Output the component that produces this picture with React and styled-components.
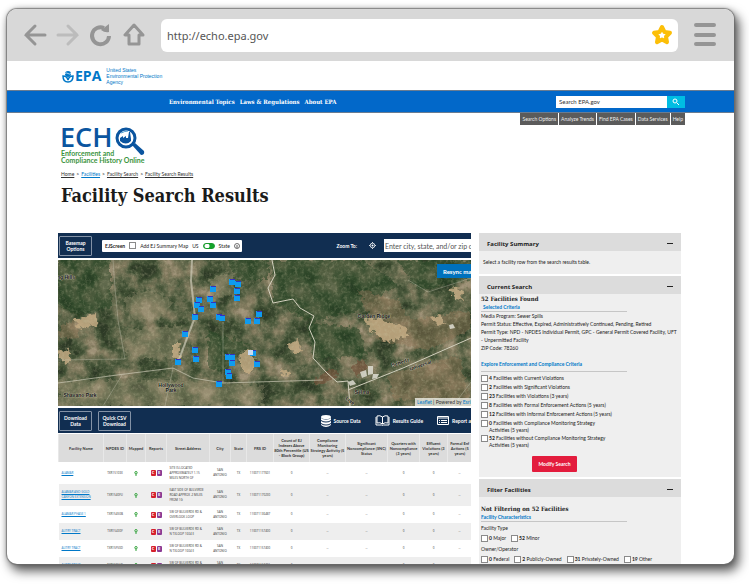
import React from "react";
import styled, { createGlobalStyle, css } from "styled-components";

const navy = "#112e51";
const blue = "#0268c9";
const link = "#0078c8";
const sans = 'Lato, "Open Sans", sans-serif';
const serif = '"DejaVu Serif Condensed", "DejaVu Serif", serif';

const GlobalStyle = createGlobalStyle`
  *, *::before, *::after { box-sizing: border-box; }
  body { margin: 0; background: #fff; color: #222; font-family: ${sans}; font-size: 5px; overflow: hidden; }
  h1, h2, h3, p, ul { margin: 0; padding: 0; }
  ul { list-style: none; }
  button, input { font: inherit; margin: 0; padding: 0; border: 0; border-radius: 0; }
  svg { display: block; flex: none; }
`;

const Desk = styled.div`
  height: 100vh;
  padding: 9px 15px 22px 7px;
`;

const BrowserWindow = styled.div`
  height: 100%;
  display: flex;
  flex-direction: column;
  border-radius: 10px;
  overflow: hidden;
  background: #fff;
  box-shadow: 0 0 1px 1px rgba(110, 110, 110, 0.75), 4px 6px 11px 1px rgba(0, 0, 0, 0.65), 0 0 6px rgba(0, 0, 0, 0.25);
`;

const Chrome = styled.header`
  flex: none;
  height: 52px;
  padding: 0 18px 0 16px;
  display: flex;
  align-items: center;
  background: #d8d8d8;
`;

const ChromeButtons = styled.div`
  display: flex;
  gap: 9px;
  width: 138px;
`;

const IconButton = styled.button`
  display: flex;
  background: none;
  color: ${(p) => (p.$faded ? "#bcbcbc" : "#959595")};
`;

const AddressBar = styled.div`
  flex: 1;
  display: flex;
  align-items: center;
  height: 33px;
  padding: 0 5px 0 6px;
  border-radius: 6px;
  background: #fff;
  margin-right: 16px;
`;

const AddressInput = styled.input`
  flex: 1;
  min-width: 0;
  background: none;
  color: #555;
  font: 11px "Noto Sans", sans-serif;
`;

const Page = styled.div`
  flex: 1;
  min-height: 0;
  overflow: hidden;
`;

const Agency = styled.div`
  height: 29px;
  padding: 1px 0 0 55px;
  display: flex;
  align-items: center;
  color: ${link};
`;

const AgencyMark = styled.strong`
  font: 700 14px/14px "Open Sans", sans-serif;
  margin: 0 5px 0 1px;
`;

const AgencyName = styled.p`
  font: 5px/6px "Liberation Sans", sans-serif;
`;

const NavBar = styled.nav`
  height: 23px;
  padding: 0 49px 0 162px;
  display: flex;
  align-items: center;
  gap: 5px;
  background: ${blue};
  border: solid #6a7c91;
  border-width: 1px 0;
`;

const NavLink = styled.a`
  color: #fff;
  font: 700 6px/10px ${serif};
  text-decoration: none;
`;

const SiteSearch = styled.form`
  margin-left: auto;
  display: flex;
  width: 129px;
  height: 12px;
`;

const SiteSearchInput = styled.input`
  flex: 1;
  min-width: 0;
  padding-left: 3px;
  background: #fff;
  font-size: 6px;
  color: #333;
  &::placeholder { color: #333; opacity: 1; }
`;

const SiteSearchButton = styled.button`
  width: 18px;
  display: grid;
  place-items: center;
  background: #00bde3;
  color: #fff;
`;

const Tools = styled.nav`
  display: flex;
  justify-content: flex-end;
  gap: 1px;
  padding-right: 49px;
`;

const Tool = styled.a`
  padding: 0 2px;
  text-align: center;
  background: #5b5b5b;
  color: #eee;
  font-size: 5px;
  line-height: 12px;
  text-decoration: none;
`;

const Masthead = styled.div`
  height: 108px;
  padding: 2px 0 0 54px;
`;

const Crumbs = styled.nav`
  display: flex;
  gap: 2px;
  margin-top: 3px;
  font-size: 5px;
  line-height: 8px;
`;

const Crumb = styled.a`
  color: ${(p) => (p.$active ? link : "#333")};
`;

const Title = styled.h1`
  margin-top: 6px;
  font: 700 18px/24px ${serif};
  color: #1b1b1b;
`;

const Columns = styled.div`
  display: grid;
  grid-template-columns: minmax(0, 1fr) 202px;
  gap: 8px;
  padding: 0 53px 0 51px;
`;

const Results = styled.main`
  min-width: 0;
  overflow: hidden;
  display: flex;
  flex-direction: column;
  gap: 2px;
`;

const Bar = styled.div`
  height: 25px;
  display: flex;
  align-items: center;
  background: ${navy};
  color: #fff;
  padding-left: 1px;
  white-space: nowrap;
  overflow: hidden;
`;

const OutlineButton = styled.button`
  width: 33px;
  height: 20px;
  flex: none;
  margin-right: 6px;
  border: 1px solid #8392a6;
  border-radius: 1px;
  background: none;
  color: #fff;
  font: 700 5px/6px ${sans};
  white-space: normal;
`;

const ScreenBox = styled.div`
  display: flex;
  align-items: center;
  flex: none;
  gap: 4px;
  height: 12px;
  margin-left: 4px;
  padding: 0 2px 0 3px;
  border-radius: 1px;
  background: #fff;
  color: #222;
  font-size: 5px;
`;

const Check = styled.input.attrs({ type: "checkbox" })`
  appearance: none;
  flex: none;
  width: 7px;
  height: 7px;
  border: 1px solid #8a8a8a;
  background: #fff;
`;

const Toggle = styled.input.attrs({ type: "checkbox", role: "switch" })`
  appearance: none;
  flex: none;
  width: 12px;
  height: 6px;
  border-radius: 3px;
  border: 1px solid #1a9a2c;
  background: radial-gradient(circle at 3px 2px, #fff 2px, #14a52b 3px);
`;

const ZoomLabel = styled.label`
  margin-left: auto;
  padding-right: 12px;
  font-size: 5px;
  font-weight: 700;
`;

const PlaceInput = styled.input`
  width: 87px;
  height: 13px;
  flex: none;
  margin-left: 8px;
  padding-left: 1px;
  background: #fff;
  font: 7px ${sans};
  &::placeholder { color: #555; opacity: 1; }
`;

const MapPane = styled.div`
  position: relative;
  height: 146px;
  overflow: hidden;
  background: #4d563b;
`;

const Resync = styled.button`
  position: absolute;
  top: 4px;
  right: 0;
  width: 34px;
  height: 14px;
  padding-left: 6px;
  overflow: hidden;
  white-space: nowrap;
  text-align: left;
  background: #0071bc;
  color: #fff;
  font: 700 6px ${sans};
`;

const Credit = styled.div`
  position: absolute;
  right: 0;
  bottom: 0;
  width: 56px;
  height: 8px;
  padding-left: 2px;
  overflow: hidden;
  white-space: nowrap;
  background: rgba(245, 245, 240, 0.75);
  font: 5px/8px ${sans};
  color: #333;
  a { color: ${link}; text-decoration: none; }
`;

const ActionLinks = styled.div`
  display: flex;
  justify-content: flex-end;
  flex: 1;
  gap: 14px;
`;

const ActionLink = styled.a`
  display: flex;
  align-items: center;
  gap: 3px;
  color: #fff;
  font-size: 5px;
  font-weight: 700;
  text-decoration: none;
`;

const Table = styled.table`
  width: 100%;
  margin-top: -1px;
  table-layout: fixed;
  border-collapse: collapse;
  text-align: center;
  font-size: 4px;
  line-height: 5px;
  color: #333;
`;

const Head = styled.th`
  width: ${(p) => p.$w}px;
  height: 28px;
  padding: 0;
  background: #dcdcdc;
  border-left: 1px solid #e8e8e8;
  font-weight: 700;
`;

const Row = styled.tr`
  height: ${(p) => (p.$tall ? 22 : 17)}px;
  background: ${(p) => (p.$shade ? "#eee" : "#fff")};
`;

const Cell = styled.td`
  padding: 0 2px;
  font: 3px/5px "Open Sans", sans-serif;
  ${(p) => p.$start && css`text-align: left; padding-left: ${p.$start}px; white-space: pre;`}
`;

const FacilityLink = styled.a`
  color: ${link};
`;

const Reports = styled.div`
  display: flex;
  justify-content: center;
  gap: 1px;
`;

const ReportTag = styled.a`
  width: 5px;
  height: 6px;
  border-radius: 1px;
  background: ${(p) => p.$color};
  color: #fff;
  font-size: 4px;
  line-height: 6px;
  font-weight: 700;
  text-decoration: none;
`;

const Center = styled.div`
  display: flex;
  justify-content: center;
`;

const Side = styled.aside`
  display: flex;
  flex-direction: column;
  gap: 2px;
`;

const Panel = styled.section`
  background: #efefef;
`;

const PanelHead = styled.h2`
  height: 18px;
  padding: 3px 8px 0;
  display: flex;
  align-items: center;
  justify-content: space-between;
  background: #dcdcdc;
  font: 700 6px/8px "Open Sans", sans-serif;
`;

const Collapse = styled.button`
  width: 6px;
  height: 1px;
  background: #222;
`;

const PanelBody = styled.div`
  min-height: ${(p) => p.$h}px;
  padding: ${(p) => p.$pad || "0 3px 0 2px"};
  font-size: 5px;
  line-height: 8px;
`;

const Found = styled.h3`
  font: 700 6px/9px ${serif};
`;

const Criteria = styled.h3`
  width: 146px;
  padding-left: ${(p) => p.$indent || 0}px;
  padding-bottom: ${(p) => p.$space || 0}px;
  margin-bottom: ${(p) => p.$after || 0}px;
  border-bottom: 1px solid #c6c6c6;
  color: ${link};
  font: 700 5px/8px ${sans};
`;

const Options = styled.ul`
  display: ${(p) => (p.$inline ? "flex" : "grid")};
  gap: ${(p) => (p.$inline ? "5px" : "1px")};
  padding: ${(p) => (p.$inline ? "3px 0 2px" : "3px 0 0")};
`;

const Option = styled.label`
  display: flex;
  gap: 1px;
  min-height: 8px;
`;

const OptionText = styled.span`
  max-width: 126px;
  line-height: 7px;
`;

const Modify = styled.button`
  display: block;
  margin: 7px 0 0 51px;
  width: 45px;
  height: 16px;
  border-radius: 1px;
  background: #e31c3d;
  color: #fff;
  font-size: 5px;
  font-weight: 700;
`;

const pins = [[174,22],[180,24],[155,29],[179,31],[179,38],[152,39],[141,40],[139,45],[155,45],[143,49],[201,54],[137,57],[161,57],[164,58],[190,61],[199,61],[127,74],[137,90],[138,99],[120,102],[170,97],[174,97],[174,103],[195,93],[199,104],[170,112],[171,116],[161,124]];

const MapArt = () => (
  <svg width="100%" height="100%" viewBox="0 0 413 146" preserveAspectRatio="xMidYMid slice" aria-label="Facility map">
    <defs>
      <filter id="land" x="0" y="0" width="1" height="1" colorInterpolationFilters="sRGB">
        <feTurbulence type="fractalNoise" baseFrequency="0.05" numOctaves="6" seed="12" />
        <feColorMatrix values="1.8 0 0 0 -.4 1.8 0 0 0 -.4 1.8 0 0 0 -.4 0 0 0 0 1" />
        <feComponentTransfer>
          <feFuncR type="table" tableValues=".18 .22 .27 .36 .44 .51 .62" />
          <feFuncG type="table" tableValues=".23 .28 .33 .39 .44 .48 .57" />
          <feFuncB type="table" tableValues=".15 .18 .22 .28 .33 .37 .47" />
        </feComponentTransfer>
      </filter>
      <filter id="grain" x="0" y="0" width="1" height="1" colorInterpolationFilters="sRGB">
        <feTurbulence type="fractalNoise" baseFrequency="0.3" numOctaves="3" seed="4" />
        <feColorMatrix values="0 0 0 0 .78 0 0 0 0 .76 0 0 0 0 .62 2.4 0 0 0 -1.1" />
      </filter>
      <filter id="rough">
        <feTurbulence type="fractalNoise" baseFrequency="0.2" numOctaves="2" seed="7" />
        <feDisplacementMap in="SourceGraphic" scale="9" xChannelSelector="R" yChannelSelector="G" />
      </filter>
    </defs>
    <rect width="413" height="146" filter="url(#land)" />
    <g filter="url(#rough)">
      <path fill="#233f22" opacity=".5" d="M0 0H53V48L20 55 0 45ZM214 0H305L340 25 300 50 255 62 215 42ZM250 62 300 68 310 95 255 100ZM170 0H210V20H175ZM150 70 190 85 165 112 150 108ZM340 0H413V20L360 30Z" />
      <path fill="#8e8a6b" opacity=".4" d="M65 40 90 28 115 42 98 62 74 58ZM150 18 175 13 178 35 160 38ZM0 120H120L205 125V146H0ZM66 70 125 65 115 98 70 100Z" />
      <path fill="#96775a" opacity=".4" d="M300 30 340 40 370 90 320 80ZM350 60 413 50V70L370 90ZM330 115 400 95 413 140H335ZM2 65 22 60 20 78 0 80Z" />
      <path fill="#c3aa83" opacity=".85" d="m306 60 15-2 28 10 2 9-24 5-14-12ZM228 84l12-5 4 12-9 1ZM371 57l11-2 5 7-7 4ZM115 83l8 0-2 16-6-2ZM181 96l10-8 8 14-6 12-10-6ZM0 92l9-3 5 9-8 6ZM222 109l11 3-7 7ZM392 28l11 2 3 10-9-1ZM15 59l22-5 4 10-18 5Z" />
      <path fill="#6d5039" d="m257 118 18-10 6 8-22 10Zm36-11 12-9 5 10-12 8Z" opacity=".7" />
    </g>
    <rect width="413" height="146" filter="url(#grain)" opacity=".3" />
    <g fill="none" stroke="#d2cfbd" strokeWidth="1">
      <path d="M214 0 217 15 210 28 215 43 235 39 242 48 256 56 251 68 257 82 255 98 269 113 279 122 290 121 292 146M413 78 345 108 310 122 290 130" />
      <path d="M134 0 133 21 137 57 120 102" strokeWidth="2" opacity=".65" />
      <path d="M0 123 59 115 115 108 135 118 165 123 265 120" opacity=".65" />
      <path d="M55 0 57 28 60 60 67 99 0 100M165 62V122M115 108 107 146M45 146 64 115M395 146 413 122M350 20 370 32 413 18" opacity=".35" />
    </g>
    <g fill="#deddd2" opacity=".85">
      <path d="m302 112 6-2 1 6-5 2Zm8-6 5 0 0 8-5 1Zm-20 16 5-2 3 4-6 2Zm25-8 6 0-2 4-5 1ZM391 65l4-1 2 4-5 1Z" />
    </g>
    {pins.map(([x, y], i) => (
      <g key={i}>
        <rect x={x - 3} y={y - 3} width="6" height="6" fill="#0f9bef" />
        <rect x={x - 2} y={y - 3} width="5" height="1" fill="#3430c0" />
      </g>
    ))}
    <rect x="190" y="90" width="5" height="5" fill="#cbdcf0" />
    <g fill="#111" stroke="#c4c1a8" strokeWidth=".6" paintOrder="stroke" fontFamily="Liberation Sans" fontWeight="700" fontSize="5" textAnchor="middle">
      <text x="316" y="58">Garden Ridge</text>
      <text x="113" y="127">Hollywood</text>
      <text x="113" y="132">Park</text>
      <text x="22" y="137">Shavano Park</text>
      <text x="8" y="19">ng Hills</text>
      <text x="304" y="134">Selma</text>
      <text x="343" y="104" transform="rotate(-20 343 104)">Schertz</text>
      <text x="363" y="107" transform="rotate(-20 363 107)">Universal</text>
      <text x="291" y="142" transform="rotate(40 291 142)">Live</text>
    </g>
  </svg>
);

const EchoLogo = () => (
  <svg width="86" height="40" viewBox="0 0 86 40" overflow="visible" role="img" aria-label="ECHO Enforcement and Compliance History Online">
    <text x="-1" y="20" fontFamily="Open Sans" fontWeight="600" fontSize="27" fill="#0b559f">ECH</text>
    <circle cx="65" cy="11" r="9" fill="#fff" stroke="#0b559f" strokeWidth="3" />
    <path d="m71 18 3-2 9 8q1 4-3 4Z" fill="#0b559f" />
    <path d="M59 14v-3l3-2v2l3-2 0 2 2 0 1-6h1l1 7v2q-5 5-11 0Z" fill="#0b559f" />
    <path d="M60 6q4-2 7-2" stroke="#4a9bd0" fill="none" />
    <g fontFamily="Lato" fontWeight="700" fontSize="7" fill="#3b9440">
      <text x="0" y="29">Enforcement and</text>
      <text x="0" y="36">Compliance History Online</text>
    </g>
  </svg>
);

const heads = [[45,"Facility Name"],[23,"NPDES ID"],[19,"Mapped"],[21,"Reports"],[43,"Street Address"],[21,"City"],[16,"State"],[27,"FRS ID"],[36,"Count of EJ Indexes Above 80th Percentile (US - Block Group)"],[36,"Compliance Monitoring Strategy Activity (5 years)"],[42,"Significant Noncompliance (SNC) Status"],[32,"Quarters with Noncompliance (3 years)"],[28,"Effluent Violations (3 years)"],[24,"Formal Enf Actions (5 years)"]];

const facilities = [
  ["ALAMAR", "TXR15103X", "SITE IS LOCATED\nAPPROXIMATELY 1.15\nMILES NORTH OF", "110071177601", true],
  ["ALAMAR AND GOLD\nCANYON EXTENSION", "TXR1540FU", "EAST SIDE OF BULVERDE\nROAD APPROX .2 MILES\nFROM 1G", "110071170230", true],
  ["ALAMAR PHASE 1", "TXR15450B", "SW OF BULVERDE RD &\nOVERLOOK LOOP", "110071136487"],
  ["AUTRY TRACT", "TXR15430F", "SW OF BULVERDE RD &\nN TXLOOP 1604 E", "110071157400"],
  ["AUTRY TRACT", "TXR15F50D", "SW OF BULVERDE RD &\nN TXLOOP 1604 E", "110071157400"],
  ["AUTRY TRACT", "TXR15F51D", "SW OF BULVERDE RD &\nN TXLOOP 1604 E", "110071157401"],
];

const criteria = [["4","Facilities with Current Violations"],["2","Facilities with Significant Violations"],["23","Facilities with Violations (3 years)"],["8","Facilities with Formal Enforcement Actions (5 years)"],["12","Facilities with Informal Enforcement Actions (5 years)"],["0","Facilities with Compliance Monitoring Strategy Activities (5 years)"],["52","Facilities without Compliance Monitoring Strategy Activities (5 years)"]];

const OptionList = ({ items, inline }) => (
  <Options $inline={inline}>
    {items.map(([n, text]) => (
      <li key={text}>
        <Option><Check /><OptionText><b>{n}</b> {text}</OptionText></Option>
      </li>
    ))}
  </Options>
);

const SidePanel = ({ title, children }) => (
  <Panel>
    <PanelHead>{title}<Collapse aria-label={`Collapse ${title}`} /></PanelHead>
    {children}
  </Panel>
);

export default function App() {
  return (
    <Desk>
      <GlobalStyle />
      <BrowserWindow>
        <Chrome>
          <ChromeButtons>
            <IconButton aria-label="Back"><svg width="24" height="24" viewBox="0 0 24 24" fill="none" stroke="currentColor" strokeWidth="3" strokeLinecap="round"><path d="M22 12H3M12 3 3 12l9 9" /></svg></IconButton>
            <IconButton $faded aria-label="Forward"><svg width="24" height="24" viewBox="0 0 24 24" fill="none" stroke="currentColor" strokeWidth="3" strokeLinecap="round"><path d="M2 12h19M12 3l9 9-9 9" /></svg></IconButton>
            <IconButton aria-label="Reload"><svg width="24" height="24" viewBox="0 0 24 24" fill="none" stroke="currentColor" strokeWidth="4"><path d="M15 5a8.500 8.500 0 1 0 5 8" /><path d="M12 7 20 1v8q-4 1-8-2Z" fill="currentColor" stroke="none" /></svg></IconButton>
            <IconButton aria-label="Home"><svg width="24" height="24" viewBox="0 0 24 24" fill="none" stroke="currentColor" strokeWidth="3" strokeLinejoin="round"><path d="M12 2 3 12h4v9h10v-9h4Z" /></svg></IconButton>
          </ChromeButtons>
          <AddressBar>
            <AddressInput aria-label="Address" defaultValue="http://echo.epa.gov" />
            <IconButton aria-label="Bookmark"><svg width="22" height="22" viewBox="0 0 22 22" fill="none" stroke="#fcbf08" strokeWidth="4" strokeLinejoin="round"><path d="m11 3 2.500 5 5.500.8-4 3.900 1 5.500-5-2.600-5 2.600 1-5.500-4-3.900 5.500-.8Z" /></svg></IconButton>
          </AddressBar>
          <IconButton aria-label="Menu"><svg width="22" height="24" viewBox="0 0 22 24" stroke="currentColor" strokeWidth="4" strokeLinecap="round"><path d="M2 2h18M2 12h18M2 21h18" /></svg></IconButton>
        </Chrome>
        <Page>
          <Agency>
            <svg width="12" height="13" viewBox="0 0 12 13" fill="none" stroke="currentColor">
              <circle cx="6" cy="4" r="3" fill="currentColor" stroke="none" />
              <path d="M3 3.500q1.500-1 3 0t3 0" stroke="#fff" strokeWidth=".7" />
              <path d="M1 6q0 6 5 6t5-6q-4 0-5 4Q5 6 1 6Z" strokeWidth="1.500" />
            </svg>
            <AgencyMark>EPA</AgencyMark>
            <AgencyName>United States<br />Environmental Protection<br />Agency</AgencyName>
          </Agency>
          <NavBar>
            <NavLink href="#topics">Environmental Topics</NavLink>
            <NavLink href="#laws">Laws &amp; Regulations</NavLink>
            <NavLink href="#about">About EPA</NavLink>
            <SiteSearch>
              <SiteSearchInput aria-label="Search EPA.gov" placeholder="Search EPA.gov" />
              <SiteSearchButton type="button" aria-label="Search"><svg width="8" height="8" viewBox="0 0 8 8" fill="none" stroke="currentColor"><circle cx="3" cy="3" r="2" /><path d="m5 5 2 2" /></svg></SiteSearchButton>
            </SiteSearch>
          </NavBar>
          <Tools>
            {["Search Options", "Analyze Trends", "Find EPA Cases", "Data Services", "Help"].map((t) => <Tool key={t} href="#tool">{t}</Tool>)}
          </Tools>
          <Masthead>
            <EchoLogo />
            <Crumbs>
              <Crumb href="#home">Home</Crumb>&gt;<Crumb $active href="#facilities">Facilities</Crumb>&gt;<Crumb href="#search">Facility Search</Crumb>&gt;<Crumb href="#results">Facility Search Results</Crumb>
            </Crumbs>
            <Title>Facility Search Results</Title>
          </Masthead>
          <Columns>
            <Results>
              <Bar>
                <OutlineButton>Basemap Options</OutlineButton>
                <ScreenBox>
                  <b>EJScreen</b>
                  <Check id="ej" /><label htmlFor="ej">Add EJ Summary Map</label>
                  <label htmlFor="scope">US</label><Toggle id="scope" /><span>State</span>
                  <svg width="6" height="6" viewBox="0 0 6 6" fill="none" stroke="#333"><circle cx="3" cy="3" r="2.500" strokeWidth=".7" /><path d="M3 2v3" strokeWidth=".8" /></svg>
                </ScreenBox>
                <ZoomLabel htmlFor="place">Zoom To:</ZoomLabel>
                <svg width="7" height="7" viewBox="0 0 7 7" fill="none" stroke="#fff"><circle cx="3.500" cy="3.500" r="2.300" strokeWidth=".8" /><circle cx="3.500" cy="3.500" r="1" fill="#fff" stroke="none" /><path d="M0 3.500h1M6 3.500h1M3.500 0v1M3.500 6v1" strokeWidth=".8" /></svg>
                <PlaceInput id="place" placeholder="Enter city, state, and/or zip code" />
              </Bar>
              <MapPane>
                <MapArt />
                <Resync>Resync map</Resync>
                <Credit><a href="#leaflet">Leaflet</a> | Powered by <a href="#esri">Esri</a> | Esri</Credit>
              </MapPane>
              <Bar>
                <OutlineButton>Download Data</OutlineButton>
                <OutlineButton>Quick CSV Download</OutlineButton>
                <ActionLinks>
                  <ActionLink href="#data"><svg width="10" height="12" viewBox="0 0 10 12" fill="#fff"><ellipse cx="5" cy="2" rx="5" ry="2" /><path d="M0 3q5 3 10 0v2q-5 3-10 0ZM0 6q5 3 10 0v2q-5 3-10 0ZM0 9q5 3 10 0v1q-5 4-10 0Z" /></svg>Source Data</ActionLink>
                  <ActionLink href="#guide"><svg width="15" height="11" viewBox="0 0 15 11" fill="none" stroke="#fff"><path d="M7.500 2Q5 0 2 1v7q3-1 5.500 1Q10 7 13 8V1q-3-1-5.500 1v7M1 2v8h5.500l1 .5 1-.5H14V2" /></svg>Results Guide</ActionLink>
                  <ActionLink href="#report"><svg width="12" height="9" viewBox="0 0 12 9" fill="none" stroke="#fff"><path d="M.5.500h11v8H.5ZM0 2h12" /><path d="M2 4.500h1M4 4.500h6M2 6.500h1M4 6.500h6" /></svg>Report a</ActionLink>
                </ActionLinks>
              </Bar>
              <Table>
                <thead><tr>{heads.map(([w, t]) => <Head key={t} $w={w}>{t}</Head>)}</tr></thead>
                <tbody>
                  {facilities.map(([name, id, street, frs, tall], i) => (
                    <Row key={id} $tall={tall} $shade={i % 2 === 1}>
                      <Cell $start={3}><FacilityLink href="#facility">{name}</FacilityLink></Cell>
                      <Cell>{id}</Cell>
                      <Cell><Center><svg width="4" height="5" viewBox="0 0 4 5" fill="none" stroke="#33a23c"><circle cx="2" cy="1.700" r="1.200" /><path d="M2 3v2" /></svg></Center></Cell>
                      <Cell><Reports><ReportTag href="#c" $color="#d5202c">C</ReportTag><ReportTag href="#e" $color="#8b3a94">E</ReportTag></Reports></Cell>
                      <Cell $start={3}>{street}</Cell>
                      <Cell>SAN ANTONIO</Cell>
                      <Cell>TX</Cell>
                      <Cell>{frs}</Cell>
                      <Cell>0</Cell><Cell>--</Cell><Cell>--</Cell><Cell>0</Cell><Cell>0</Cell><Cell>--</Cell>
                    </Row>
                  ))}
                </tbody>
              </Table>
            </Results>
            <Side>
              <SidePanel title="Facility Summary">
                <PanelBody $h={23} $pad="7px 4px 0">Select a facility row from the search results table.</PanelBody>
              </SidePanel>
              <SidePanel title="Current Search">
                <PanelBody $h={183}>
                  <Found>52 Facilities Found</Found>
                  <Criteria $indent={2}>Selected Criteria</Criteria>
                  <p>Media Program: Sewer Spills</p>
                  <p>Permit Status: Effective, Expired, Administratively Continued, Pending, Retired</p>
                  <p>Permit Type: NPD - NPDES Individual Permit, GPC - General Permit Covered Facility, UFT<br />- Unpermitted Facility</p>
                  <p>ZIP Code: 78260</p>
                  <br />
                  <Criteria $space={3}>Explore Enforcement and Compliance Criteria</Criteria>
                  <OptionList items={criteria} />
                  <Modify>Modify Search</Modify>
                </PanelBody>
              </SidePanel>
              <SidePanel title="Filter Facilities">
                <PanelBody $h={90} $pad="7px 3px 0 2px">
                  <Found>Not Filtering on 52 Facilities</Found>
                  <Criteria $after={2}>Facility Characteristics</Criteria>
                  <p>Facility Type</p>
                  <OptionList inline items={[["0", "Major"], ["52", "Minor"]]} />
                  <p>Owner/Operator</p>
                  <OptionList inline items={[["0", "Federal"], ["2", "Publicly-Owned"], ["31", "Privately-Owned"], ["19", "Other"]]} />
                </PanelBody>
              </SidePanel>
            </Side>
          </Columns>
        </Page>
      </BrowserWindow>
    </Desk>
  );
}
